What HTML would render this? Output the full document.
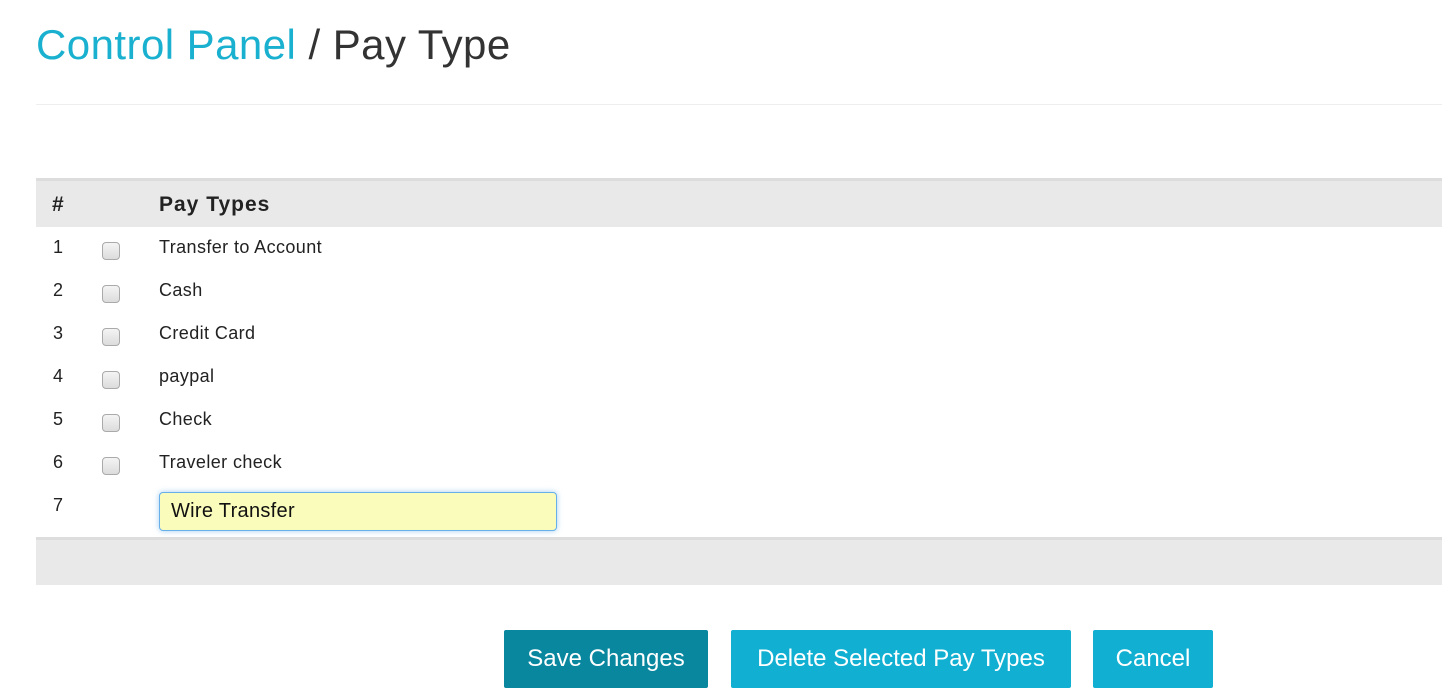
<!DOCTYPE html>
<html><head><style>
body{margin:0;width:1442px;height:693px;background:#fff;font-family:"Liberation Sans",sans-serif;position:relative;overflow:hidden;color:#333}
.a{position:absolute}
h1{position:absolute;left:36px;top:21px;margin:0;font-weight:normal;font-size:42px;color:#333;letter-spacing:0.45px;white-space:nowrap}
h1 span{color:#1ab0cf}
.row{position:absolute;left:0;font-size:18px;color:#222;letter-spacing:0.4px}
.cb{position:absolute;left:102px;width:18px;height:18px;border:1px solid #aaa;border-radius:4px;background:linear-gradient(#f4f4f4,#dcdcdc);box-sizing:border-box}
.btn{position:absolute;top:630px;height:58px;color:#fff;font-size:24px;line-height:58px;text-align:center;border-radius:2px;white-space:nowrap}
</style></head><body>
<h1><span>Control Panel</span> / Pay Type</h1>
<div class="a" style="left:36px;top:104px;width:1406px;height:1px;background:#eee"></div>
<div class="a" style="left:36px;top:178px;width:1406px;height:3px;background:#ddd"></div>
<div class="a" style="left:36px;top:181px;width:1406px;height:46px;background:#e9e9e9"></div>
<div class="a" style="left:52px;top:193px;font-size:21px;font-weight:bold;color:#222">#</div>
<div class="a" style="left:159px;top:193px;font-size:21px;font-weight:bold;color:#222;letter-spacing:1px">Pay Types</div>

<div class="row" style="top:237px"><span class="a" style="left:53px">1</span><span class="a" style="left:159px;white-space:nowrap">Transfer to Account</span></div><div class="cb" style="top:242px"></div>
<div class="row" style="top:280px"><span class="a" style="left:53px">2</span><span class="a" style="left:159px">Cash</span></div><div class="cb" style="top:285px"></div>
<div class="row" style="top:323px"><span class="a" style="left:53px">3</span><span class="a" style="left:159px;white-space:nowrap">Credit Card</span></div><div class="cb" style="top:328px"></div>
<div class="row" style="top:366px"><span class="a" style="left:53px">4</span><span class="a" style="left:159px">paypal</span></div><div class="cb" style="top:371px"></div>
<div class="row" style="top:409px"><span class="a" style="left:53px">5</span><span class="a" style="left:159px">Check</span></div><div class="cb" style="top:414px"></div>
<div class="row" style="top:452px"><span class="a" style="left:53px">6</span><span class="a" style="left:159px;white-space:nowrap">Traveler check</span></div><div class="cb" style="top:457px"></div>
<div class="row" style="top:495px"><span class="a" style="left:53px">7</span></div>
<div class="a" style="left:159px;top:492px;width:398px;height:39px;box-sizing:border-box;border:1px solid #66afe9;border-radius:4px;background:#fafcbb;box-shadow:0 0 6px rgba(102,175,233,.6);font-size:20px;line-height:37px;padding-left:11px;color:#111;letter-spacing:0.3px">Wire Transfer</div>

<div class="a" style="left:36px;top:537px;width:1406px;height:3px;background:#ddd"></div>
<div class="a" style="left:36px;top:540px;width:1406px;height:45px;background:#e9e9e9"></div>

<div class="btn" style="left:504px;width:204px;background:#08879f">Save Changes</div>
<div class="btn" style="left:731px;width:340px;background:#11b0d2">Delete Selected Pay Types</div>
<div class="btn" style="left:1093px;width:120px;background:#11b0d2">Cancel</div>
</body></html>
